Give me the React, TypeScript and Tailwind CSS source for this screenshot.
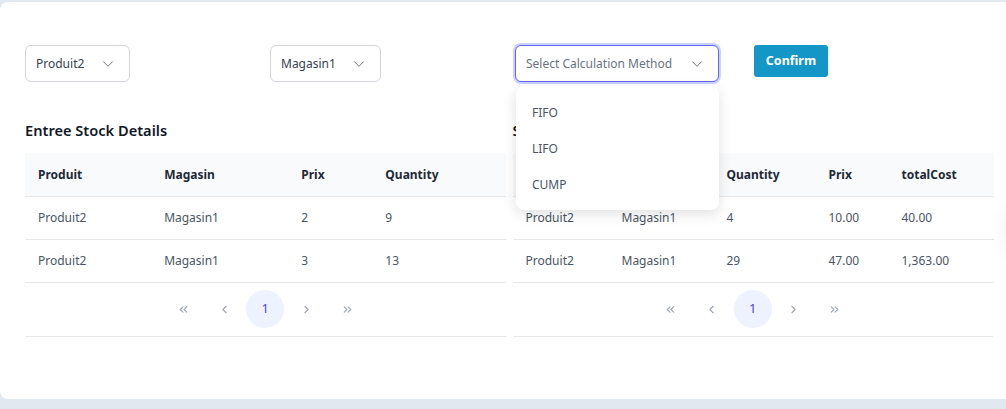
import { ChevronDown, ChevronLeft, ChevronRight, ChevronsLeft, ChevronsRight } from 'lucide-react';

type Row = string[];

const entreeRows: Row[] = [
    ['Produit2', 'Magasin1', '2', '9'],
    ['Produit2', 'Magasin1', '3', '13'],
];

const sortieRows: Row[] = [
    ['Produit2', 'Magasin1', '4', '10.00', '40.00'],
    ['Produit2', 'Magasin1', '29', '47.00', '1,363.00'],
];

function SelectBox({ label, width, placeholder }: { label: string; width: string; placeholder?: boolean }) {
    return (
        <div
            className={`${width} h-[37px] flex items-center justify-between pl-[10px] pr-[12px] rounded-md bg-white ${
                placeholder
                    ? 'border border-[#6366f1] ring-2 ring-[#c7d2fe] text-[#6b7280]'
                    : 'border border-[#d1d5db] text-[#374151]'
            }`}
        >
            <span className="text-[12px]">{label}</span>
            <ChevronDown size={18} strokeWidth={1.3} className="text-[#6b7280]" />
        </div>
    );
}

function Pagination() {
    return (
        <div className="h-[54px] flex items-center justify-center gap-[3px] border-b border-[#e5e7eb] text-[#9ca3af]">
            <div className="w-[38px] flex justify-center"><ChevronsLeft size={13} strokeWidth={2} /></div>
            <div className="w-[38px] flex justify-center"><ChevronLeft size={13} strokeWidth={2} /></div>
            <div className="w-[38px] h-[38px] rounded-full bg-[#eef2ff] flex items-center justify-center text-[13px] text-[#4f46e5]">1</div>
            <div className="w-[38px] flex justify-center"><ChevronRight size={13} strokeWidth={2} /></div>
            <div className="w-[38px] flex justify-center"><ChevronsRight size={13} strokeWidth={2} /></div>
        </div>
    );
}

function StockTable({ headers, rows, cols }: { headers: string[]; rows: Row[]; cols: string[] }) {
    return (
        <div>
            <table className="w-full table-fixed text-[12px]">
                <colgroup>
                    {cols.map((c, i) => (
                        <col key={i} style={{ width: c }} />
                    ))}
                </colgroup>
                <thead>
                    <tr className="bg-[#f9fafb] border-b border-[#e5e7eb] h-[43px]">
                        {headers.map((h) => (
                            <th key={h} className="text-left font-bold text-[#1f2937] pl-[13px] pt-[2px]">{h}</th>
                        ))}
                    </tr>
                </thead>
                <tbody>
                    {rows.map((r, i) => (
                        <tr key={i} className="border-b border-[#e5e7eb] h-[43px]">
                            {r.map((c, j) => (
                                <td key={j} className="text-[#4b5563] pl-[13px]">{c}</td>
                            ))}
                        </tr>
                    ))}
                </tbody>
            </table>
            <Pagination />
        </div>
    );
}

export default function App() {
    return (
        <div className="w-[1006px] h-[409px] bg-[#e2e8f0] pt-[2px] overflow-hidden relative" style={{ fontFamily: '"Noto Sans", "Open Sans", sans-serif' }}>
            <div className="h-[397px] w-[1020px] bg-white rounded-l-lg pl-[25px] pt-[43px] relative">
                {/* filtres */}
                <div className="flex items-start">
                    <div className="w-[245px]"><SelectBox label="Produit2" width="w-[105px]" /></div>
                    <div className="w-[245px]"><SelectBox label="Magasin1" width="w-[111px]" /></div>
                    <div className="w-[239px] relative">
                        <SelectBox label="Select Calculation Method" width="w-[204px]" placeholder />
                        <div className="absolute left-[1px] top-[41px] w-[203px] bg-white rounded-lg shadow-[0_4px_14px_rgba(0,0,0,0.12)] py-[8px] z-10 text-[12px] text-[#4b5563]">
                            <div className="h-[36px] flex items-center pl-[16px] pt-[2px]">FIFO</div>
                            <div className="h-[36px] flex items-center pl-[16px] pt-[2px]">LIFO</div>
                            <div className="h-[36px] flex items-center pl-[16px] pt-[2px]">CUMP</div>
                        </div>
                    </div>
                    <button className="h-[32px] w-[74px] rounded-[3px] bg-[#1497c7] text-white text-[12.5px] font-bold">Confirm</button>
                </div>

                {/* tables */}
                <div className="grid grid-cols-2 gap-[7px] w-[968px] mt-[38px]">
                    <div>
                        <h2 className="text-[14.6px] font-semibold text-[#111827] h-[33px]">Entree Stock Details</h2>
                        <StockTable
                            headers={['Produit', 'Magasin', 'Prix', 'Quantity']}
                            rows={entreeRows}
                            cols={['126px', '137px', '84px', '133px']}
                        />
                    </div>
                    <div>
                        <h2 className="text-[14.6px] font-semibold text-[#111827] h-[33px]">Sortie Stock Details</h2>
                        <StockTable
                            headers={['Produit', 'Magasin', 'Quantity', 'Prix', 'totalCost']}
                            rows={sortieRows}
                            cols={['96px', '105px', '102px', '73px', '105px']}
                        />
                    </div>
                </div>
            </div>
            <div className="absolute right-[-50px] top-[200px] w-[50px] h-[60px] rounded-full bg-white shadow-[0_0_20px_rgba(0,0,0,0.07)]" />
        </div>
    );
}
